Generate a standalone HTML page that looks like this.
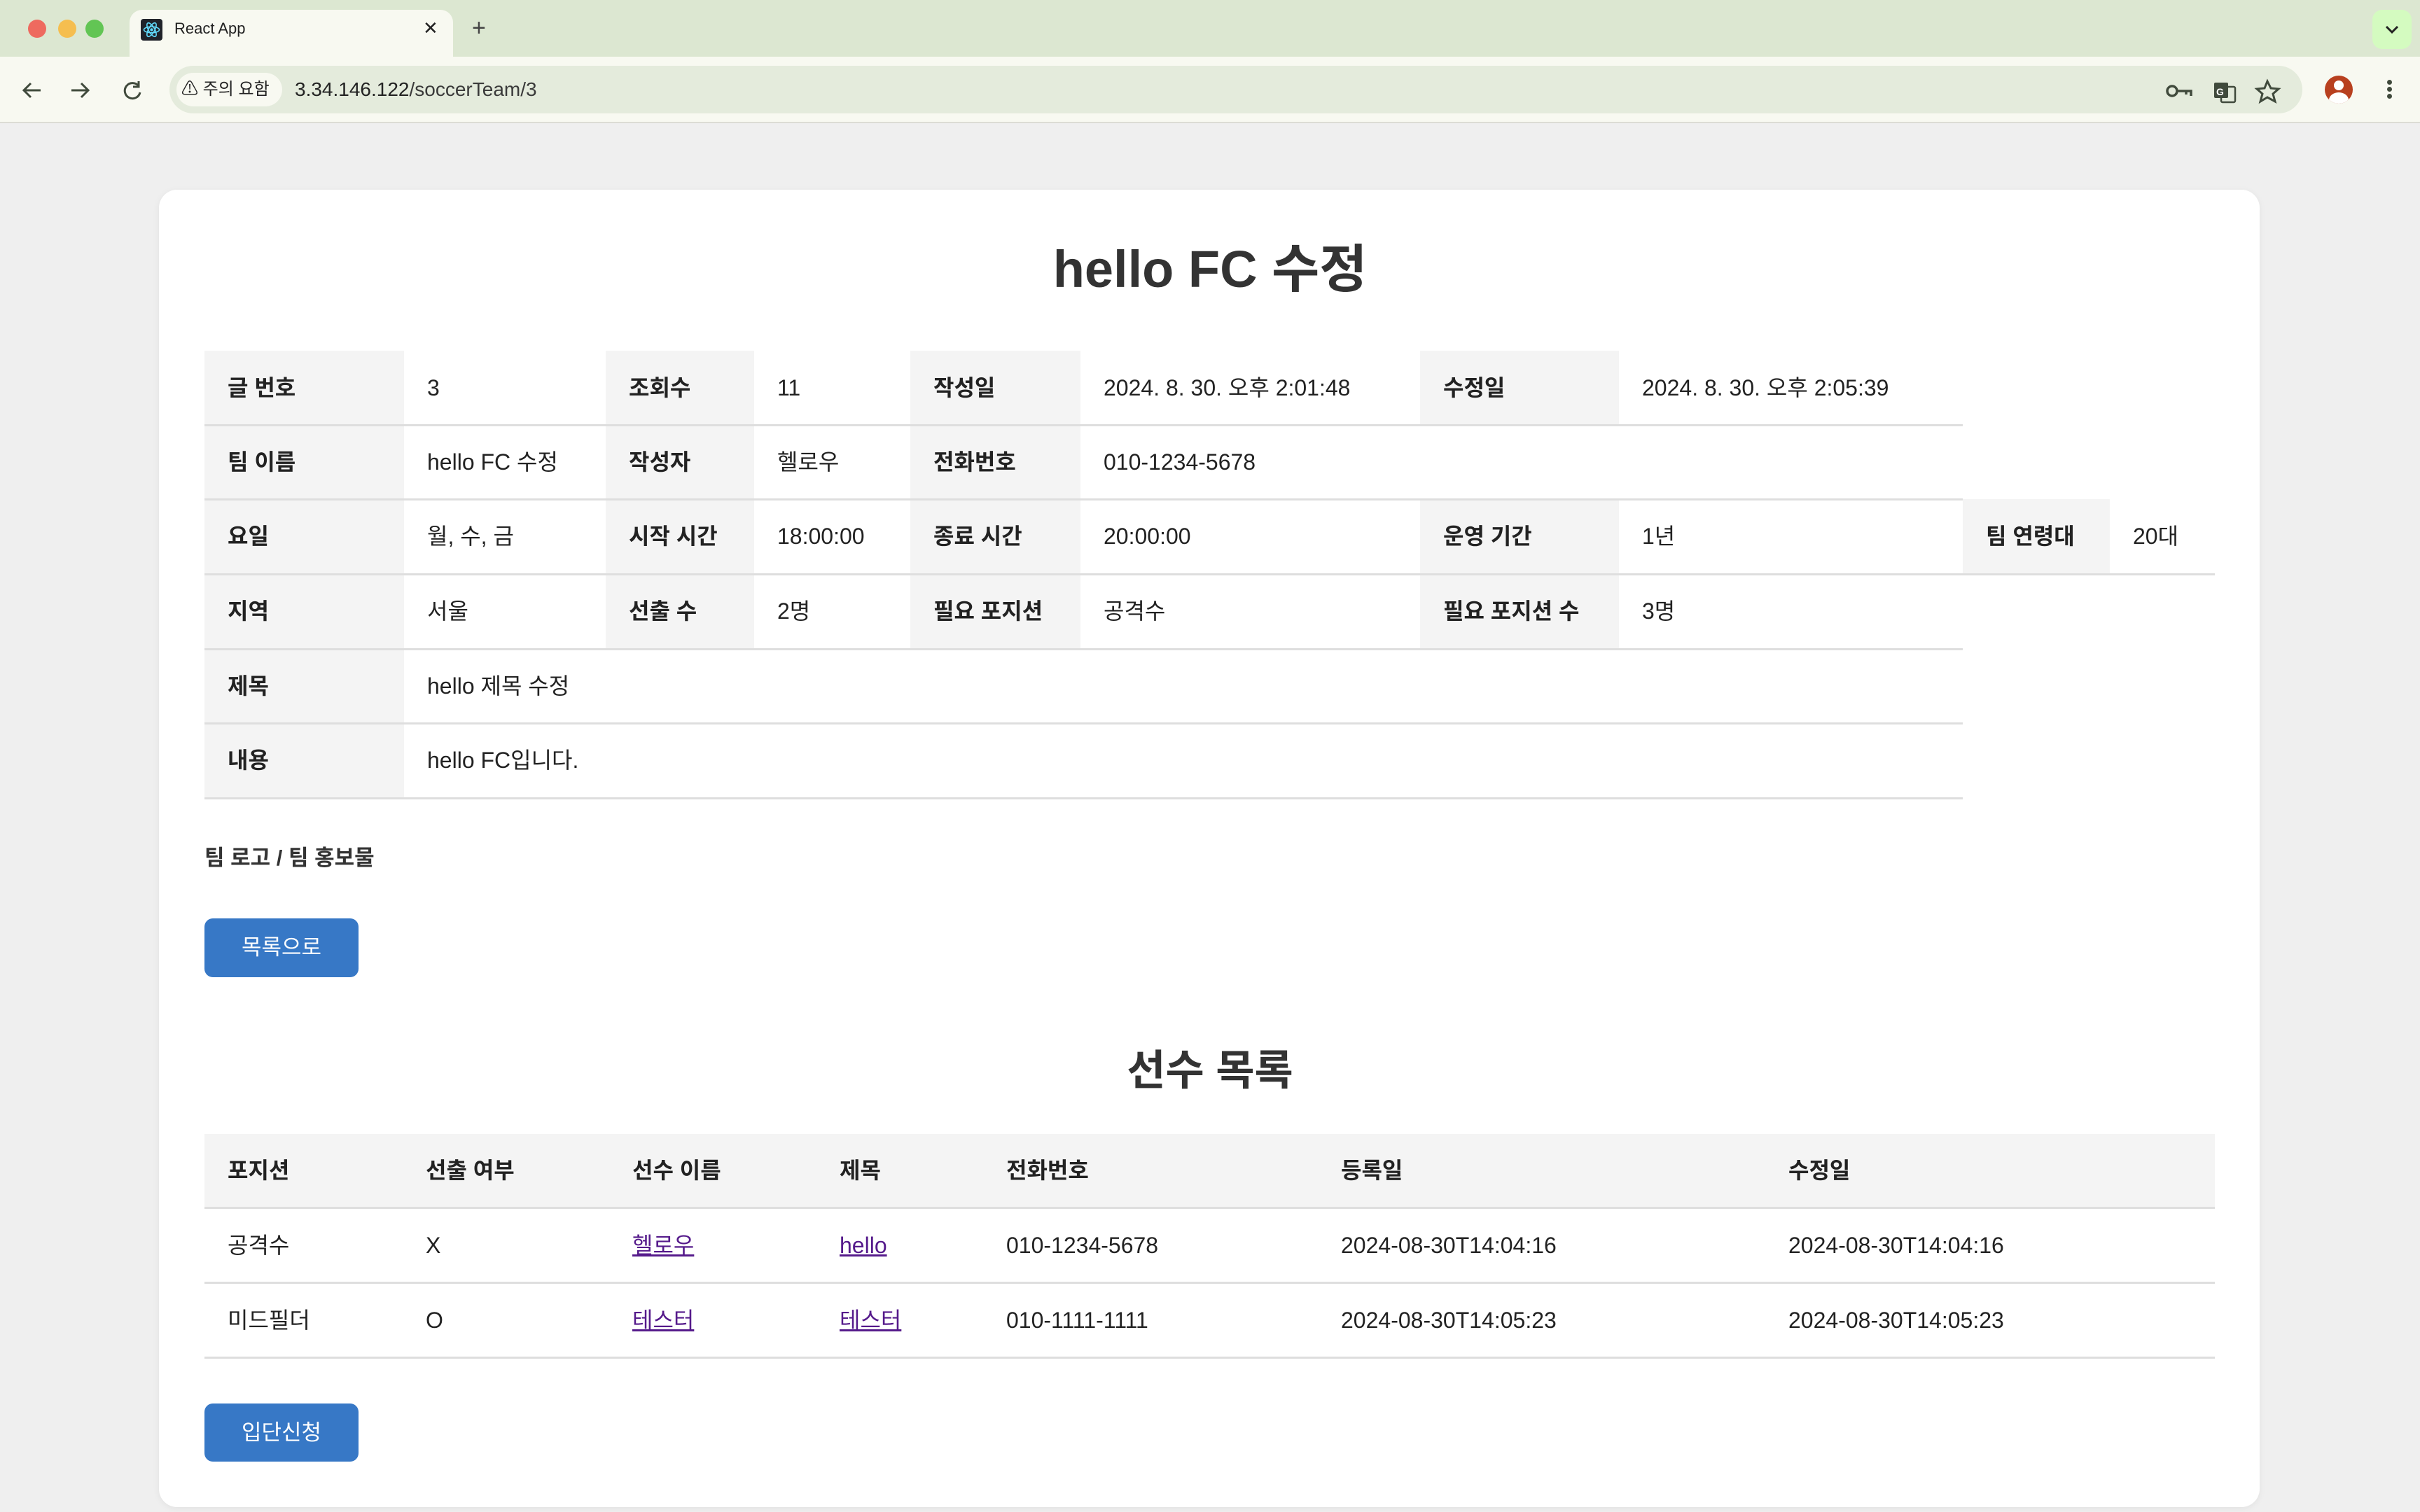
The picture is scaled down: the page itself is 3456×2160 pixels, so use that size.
<!DOCTYPE html>
<html><head><meta charset="utf-8"><style>
*{margin:0;padding:0;box-sizing:border-box}
body{width:3456px;height:2160px;background:#efefef;position:relative;overflow:hidden;font-family:"Liberation Sans","Noto Sans CJK KR",sans-serif;color:#222}
.a{position:absolute}
.t{position:absolute;font-size:32px;line-height:106px;white-space:nowrap}
.b{font-weight:bold}
.g{position:absolute;background:#f4f4f4}
.l{position:absolute;height:3px;background:#dedede}
a{color:#551a8b;text-decoration:underline}
</style></head><body>
<!-- browser chrome -->
<div class="a" style="left:0;top:0;width:3456px;height:81px;background:#dce7d1"></div>
<div class="a" style="left:0;top:81px;width:3456px;height:94px;background:#f8f9f1"></div>
<div class="a" style="left:0;top:174px;width:3456px;height:2px;background:#dcdcd4"></div>
<div class="a" style="left:40px;top:28px;width:26px;height:26px;border-radius:50%;background:#ee6a5f"></div>
<div class="a" style="left:83px;top:28px;width:26px;height:26px;border-radius:50%;background:#f5be4f"></div>
<div class="a" style="left:122px;top:28px;width:26px;height:26px;border-radius:50%;background:#62c554"></div>
<div class="a" style="left:185px;top:14px;width:462px;height:80px;background:#f8f9f1;border-radius:18px 18px 0 0"></div>
<div class="a" style="left:201px;top:27px;width:31px;height:31px;border-radius:4px;background:#20232a"></div>
<svg class="a" style="left:201px;top:27px" width="31" height="31" viewBox="0 0 31 31"><g fill="none" stroke="#61dafb" stroke-width="1.6"><ellipse cx="15.5" cy="15.5" rx="11" ry="4.3"/><ellipse cx="15.5" cy="15.5" rx="11" ry="4.3" transform="rotate(60 15.5 15.5)"/><ellipse cx="15.5" cy="15.5" rx="11" ry="4.3" transform="rotate(120 15.5 15.5)"/></g><circle cx="15.5" cy="15.5" r="2.2" fill="#61dafb"/></svg>
<div class="a" style="left:249px;top:26px;font-size:22px;line-height:30px;color:#222">React App</div>
<div class="a" style="left:604px;top:24px;font-size:26px;line-height:32px;color:#222">✕</div>
<div class="a" style="left:674px;top:20px;font-size:34px;line-height:40px;color:#444">+</div>
<div class="a" style="left:3388px;top:14px;width:56px;height:56px;border-radius:14px;background:#d4fbc0"></div>
<svg class="a" style="left:3404px;top:32px" width="24" height="20"><path d="M4 6l8 8 8-8" fill="none" stroke="#222" stroke-width="3"/></svg>
<svg class="a" style="left:26px;top:112px" width="200" height="34"><g fill="none" stroke="#404a3c" stroke-width="3"><path d="M32 17H8M18 7L8 17l10 10"/><path d="M76 17h24M90 7l10 10-10 10"/><path d="M172 11a11 11 0 1 0 2 9M172 4v8h-8"/></g></svg>
<div class="a" style="left:242px;top:94px;width:3046px;height:68px;border-radius:34px;background:#e4ebdc"></div>
<div class="a" style="left:252px;top:104px;width:151px;height:48px;border-radius:24px;background:#f8f9f1"></div>
<div class="a" style="left:259px;top:110px;font-size:24px;line-height:36px;color:#222">⚠ 주의 요함</div>
<div class="a" style="left:421px;top:108px;font-size:28px;line-height:40px;color:#222">3.34.146.122<span style="color:#3a3a3a">/soccerTeam/3</span></div>
<svg class="a" style="left:3090px;top:110px" width="180" height="40"><g fill="none" stroke="#404a3c" stroke-width="3.5"><circle cx="12" cy="20" r="7"/><path d="M19 20h20v7M32 20v5"/><path d="M148 6l5 10 11 1-8 7 3 11-11-6-10 6 3-11-8-7 11-1z" stroke-width="3"/></g><rect x="72" y="8" width="20" height="22" rx="2" fill="#404a3c"/><rect x="82" y="14" width="20" height="22" rx="2" fill="none" stroke="#404a3c" stroke-width="2.5"/><text x="75" y="26" font-size="14" font-weight="bold" fill="#fff" font-family="Liberation Sans">G</text></svg>
<div class="a" style="left:3320px;top:108px;width:40px;height:40px;border-radius:50%;background:#b8401f;overflow:hidden"><div class="a" style="left:13px;top:7px;width:14px;height:14px;border-radius:50%;background:#fff"></div><div class="a" style="left:6px;top:24px;width:28px;height:22px;border-radius:50%;background:#fff"></div></div>
<div class="a" style="left:3409px;top:114px;width:7px;height:7px;border-radius:50%;background:#404a3c;box-shadow:0 10px 0 #404a3c,0 20px 0 #404a3c"></div>
<!-- card -->
<div class="a" style="left:227px;top:271px;width:3000px;height:1882px;background:#fff;border-radius:26px;box-shadow:0 2px 10px rgba(0,0,0,.06)"></div>
<div class="a b" style="left:0;width:3456px;top:338px;text-align:center;font-size:74px;line-height:94px;color:#333">hello FC 수정</div>
<!-- info table gray cells -->
<div class="g" style="left:292px;top:501px;width:285px;height:639px"></div>
<div class="g" style="left:865px;top:501px;width:212px;height:426px"></div>
<div class="g" style="left:1300px;top:501px;width:243px;height:426px"></div>
<div class="g" style="left:2028px;top:501px;width:284px;height:106px"></div>
<div class="g" style="left:2028px;top:713px;width:284px;height:214px"></div>
<div class="g" style="left:2803px;top:713px;width:210px;height:107px"></div>
<div class="l" style="left:292px;top:606px;width:2511px"></div>
<div class="l" style="left:292px;top:712px;width:2511px"></div>
<div class="l" style="left:292px;top:819px;width:2871px"></div>
<div class="l" style="left:292px;top:926px;width:2511px"></div>
<div class="l" style="left:292px;top:1032px;width:2511px"></div>
<div class="l" style="left:292px;top:1139px;width:2511px"></div>
<!-- row1 -->
<div class="t b" style="left:325px;top:501px">글 번호</div><div class="t" style="left:610px;top:501px">3</div>
<div class="t b" style="left:898px;top:501px">조회수</div><div class="t" style="left:1110px;top:501px">11</div>
<div class="t b" style="left:1333px;top:501px">작성일</div><div class="t" style="left:1576px;top:501px">2024. 8. 30. 오후 2:01:48</div>
<div class="t b" style="left:2061px;top:501px">수정일</div><div class="t" style="left:2345px;top:501px">2024. 8. 30. 오후 2:05:39</div>
<!-- row2 -->
<div class="t b" style="left:325px;top:607px">팀 이름</div><div class="t" style="left:610px;top:607px">hello FC 수정</div>
<div class="t b" style="left:898px;top:607px">작성자</div><div class="t" style="left:1110px;top:607px">헬로우</div>
<div class="t b" style="left:1333px;top:607px">전화번호</div><div class="t" style="left:1576px;top:607px">010-1234-5678</div>
<!-- row3 -->
<div class="t b" style="left:325px;top:713px">요일</div><div class="t" style="left:610px;top:713px">월, 수, 금</div>
<div class="t b" style="left:898px;top:713px">시작 시간</div><div class="t" style="left:1110px;top:713px">18:00:00</div>
<div class="t b" style="left:1333px;top:713px">종료 시간</div><div class="t" style="left:1576px;top:713px">20:00:00</div>
<div class="t b" style="left:2061px;top:713px">운영 기간</div><div class="t" style="left:2345px;top:713px">1년</div>
<div class="t b" style="left:2836px;top:713px">팀 연령대</div><div class="t" style="left:3046px;top:713px">20대</div>
<!-- row4 -->
<div class="t b" style="left:325px;top:820px">지역</div><div class="t" style="left:610px;top:820px">서울</div>
<div class="t b" style="left:898px;top:820px">선출 수</div><div class="t" style="left:1110px;top:820px">2명</div>
<div class="t b" style="left:1333px;top:820px">필요 포지션</div><div class="t" style="left:1576px;top:820px">공격수</div>
<div class="t b" style="left:2061px;top:820px">필요 포지션 수</div><div class="t" style="left:2345px;top:820px">3명</div>
<!-- row5,6 -->
<div class="t b" style="left:325px;top:927px">제목</div><div class="t" style="left:610px;top:927px">hello 제목 수정</div>
<div class="t b" style="left:325px;top:1033px">내용</div><div class="t" style="left:610px;top:1033px">hello FC입니다.</div>
<div class="a b" style="left:292px;top:1205px;font-size:31px;line-height:42px;color:#333">팀 로고 / 팀 홍보물</div>
<div class="a" style="left:292px;top:1312px;width:220px;height:84px;border-radius:12px;background:#3778c6;color:#fff;font-size:31px;line-height:84px;text-align:center">목록으로</div>
<div class="a b" style="left:0;width:3456px;top:1492px;text-align:center;font-size:60px;line-height:76px;color:#333">선수 목록</div>
<!-- player table -->
<div class="g" style="left:292px;top:1620px;width:2871px;height:105px"></div>
<div class="l" style="left:292px;top:1724px;width:2871px"></div>
<div class="l" style="left:292px;top:1831px;width:2871px"></div>
<div class="l" style="left:292px;top:1938px;width:2871px"></div>
<div class="t b" style="left:325px;top:1620px;line-height:105px">포지션</div>
<div class="t b" style="left:608px;top:1620px;line-height:105px">선출 여부</div>
<div class="t b" style="left:903px;top:1620px;line-height:105px">선수 이름</div>
<div class="t b" style="left:1199px;top:1620px;line-height:105px">제목</div>
<div class="t b" style="left:1437px;top:1620px;line-height:105px">전화번호</div>
<div class="t b" style="left:1915px;top:1620px;line-height:105px">등록일</div>
<div class="t b" style="left:2554px;top:1620px;line-height:105px">수정일</div>
<div class="t" style="left:325px;top:1727px;line-height:104px">공격수</div>
<div class="t" style="left:608px;top:1727px;line-height:104px">X</div>
<div class="t" style="left:903px;top:1727px;line-height:104px"><a>헬로우</a></div>
<div class="t" style="left:1199px;top:1727px;line-height:104px"><a>hello</a></div>
<div class="t" style="left:1437px;top:1727px;line-height:104px">010-1234-5678</div>
<div class="t" style="left:1915px;top:1727px;line-height:104px">2024-08-30T14:04:16</div>
<div class="t" style="left:2554px;top:1727px;line-height:104px">2024-08-30T14:04:16</div>
<div class="t" style="left:325px;top:1834px;line-height:104px">미드필더</div>
<div class="t" style="left:608px;top:1834px;line-height:104px">O</div>
<div class="t" style="left:903px;top:1834px;line-height:104px"><a>테스터</a></div>
<div class="t" style="left:1199px;top:1834px;line-height:104px"><a>테스터</a></div>
<div class="t" style="left:1437px;top:1834px;line-height:104px">010-1111-1111</div>
<div class="t" style="left:1915px;top:1834px;line-height:104px">2024-08-30T14:05:23</div>
<div class="t" style="left:2554px;top:1834px;line-height:104px">2024-08-30T14:05:23</div>
<div class="a" style="left:292px;top:2005px;width:220px;height:83px;border-radius:12px;background:#3778c6;color:#fff;font-size:31px;line-height:83px;text-align:center">입단신청</div>
</body></html>
